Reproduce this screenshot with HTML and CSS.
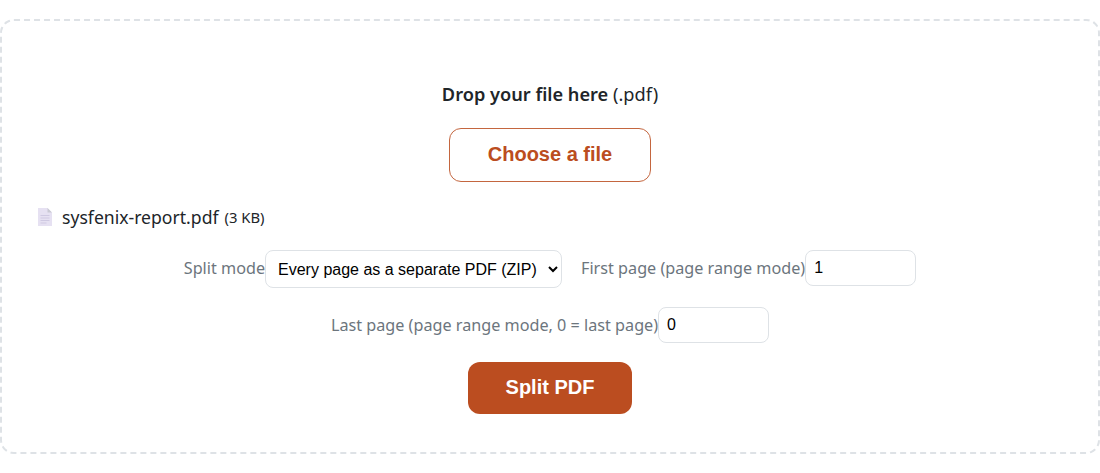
FILE: index.html
```html
<!DOCTYPE html>
<html lang="en">
<head>
    <meta charset="UTF-8">
    <meta name="viewport" content="width=device-width, initial-scale=1.0">
    <title>Split PDF</title>
    <link rel="stylesheet" href="styles.css">
</head>
<body>
    <form class="dropzone">
        <p class="drop-title"><strong>Drop your file here</strong> (.pdf)</p>
        <div class="choose-row">
            <button type="button" class="btn-outline">Choose a file</button>
        </div>

        <div class="file-row">
            <svg class="file-icon" viewBox="0 0 16 20" width="16" height="20" aria-hidden="true">
                <path d="M1 1h9.500L15 5.500V19H1z" fill="#e6e1f2"/>
                <path d="M10.500 1L15 5.500h-4.500z" fill="#c9c9d3"/>
                <path d="M3.500 8.500h9M3.500 11h9M3.500 13.500h9M3.500 16h6" stroke="#cfc9e2" stroke-width="1.200"/>
            </svg>
            <span class="file-name">sysfenix-report.pdf</span>
            <small class="file-size">(3 KB)</small>
        </div>

        <div class="options">
            <label class="field">
                <span>Split mode</span>
                <select class="mode-select">
                    <option>Every page as a separate PDF (ZIP)</option>
                </select>
            </label>
            <label class="field">
                <span>First page (page range mode)</span>
                <input type="number" class="page-input" value="1">
            </label>
            <label class="field">
                <span>Last page (page range mode, 0 = last page)</span>
                <input type="number" class="page-input" value="0">
            </label>
        </div>

        <div class="submit-row">
            <button type="button" class="btn-primary">Split PDF</button>
        </div>
    </form>
</body>
</html>
```

FILE: styles.css
```css
:root {
    --accent: #bb4d20;
    --line: #dee2e6;
}

body {
    margin: 0;
    background: #ffffff;
    color: #212529;
    font-family: 'Noto Sans', 'Open Sans', sans-serif;
    font-size: 17px;
}

.dropzone {
    box-sizing: border-box;
    height: 435px;
    margin-top: 19px;
    padding: 60px 35px 0;
    border: 2px dashed var(--line);
    border-radius: 14px;
}

.drop-title {
    margin: 0;
    height: 26px;
    line-height: 26px;
    font-size: 18.200px;
    text-align: center;
}

.drop-title strong {
    font-weight: 600;
}

.choose-row,
.submit-row {
    display: flex;
    justify-content: center;
}

.choose-row {
    margin-top: 21px;
}

.btn-outline,
.btn-primary {
    padding: 0 0 2px;
    font-family: 'Liberation Sans', Arial, sans-serif;
    font-weight: 700;
    font-size: 20px;
    cursor: pointer;
}

.btn-outline {
    width: 202px;
    height: 54px;
    background: #ffffff;
    color: var(--accent);
    border: 1px solid #c4663f;
    border-radius: 12px;
}

.btn-primary {
    width: 164px;
    height: 52px;
    background: var(--accent);
    color: #ffffff;
    border: none;
    border-radius: 12px;
}

.file-row {
    display: flex;
    align-items: center;
    margin-top: 23px;
    height: 24px;
}

.file-icon {
    margin-right: 9px;
}

.file-name {
    font-size: 17.600px;
}

.file-size {
    margin-left: 6px;
    font-size: 14.800px;
}

.options {
    display: flex;
    flex-wrap: wrap;
    justify-content: center;
    align-items: flex-start;
    gap: 19px;
    margin-top: 21px;
}

.field {
    display: flex;
    color: #6c757d;
    font-size: 16.200px;
    line-height: 36px;
}

.mode-select {
    height: 38px;
    width: 297px;
    padding: 0 8px;
    background: #ffffff;
    color: #000000;
    border: 1px solid var(--line);
    border-radius: 8px;
    font-family: 'Liberation Sans', Arial, sans-serif;
    font-size: 16px;
}

.page-input {
    box-sizing: border-box;
    width: 111px;
    height: 36px;
    padding: 0 8px;
    color: #000000;
    border: 1px solid var(--line);
    border-radius: 8px;
    font-family: 'Liberation Sans', Arial, sans-serif;
    font-size: 16px;
}

.submit-row {
    margin-top: 19px;
}
```
